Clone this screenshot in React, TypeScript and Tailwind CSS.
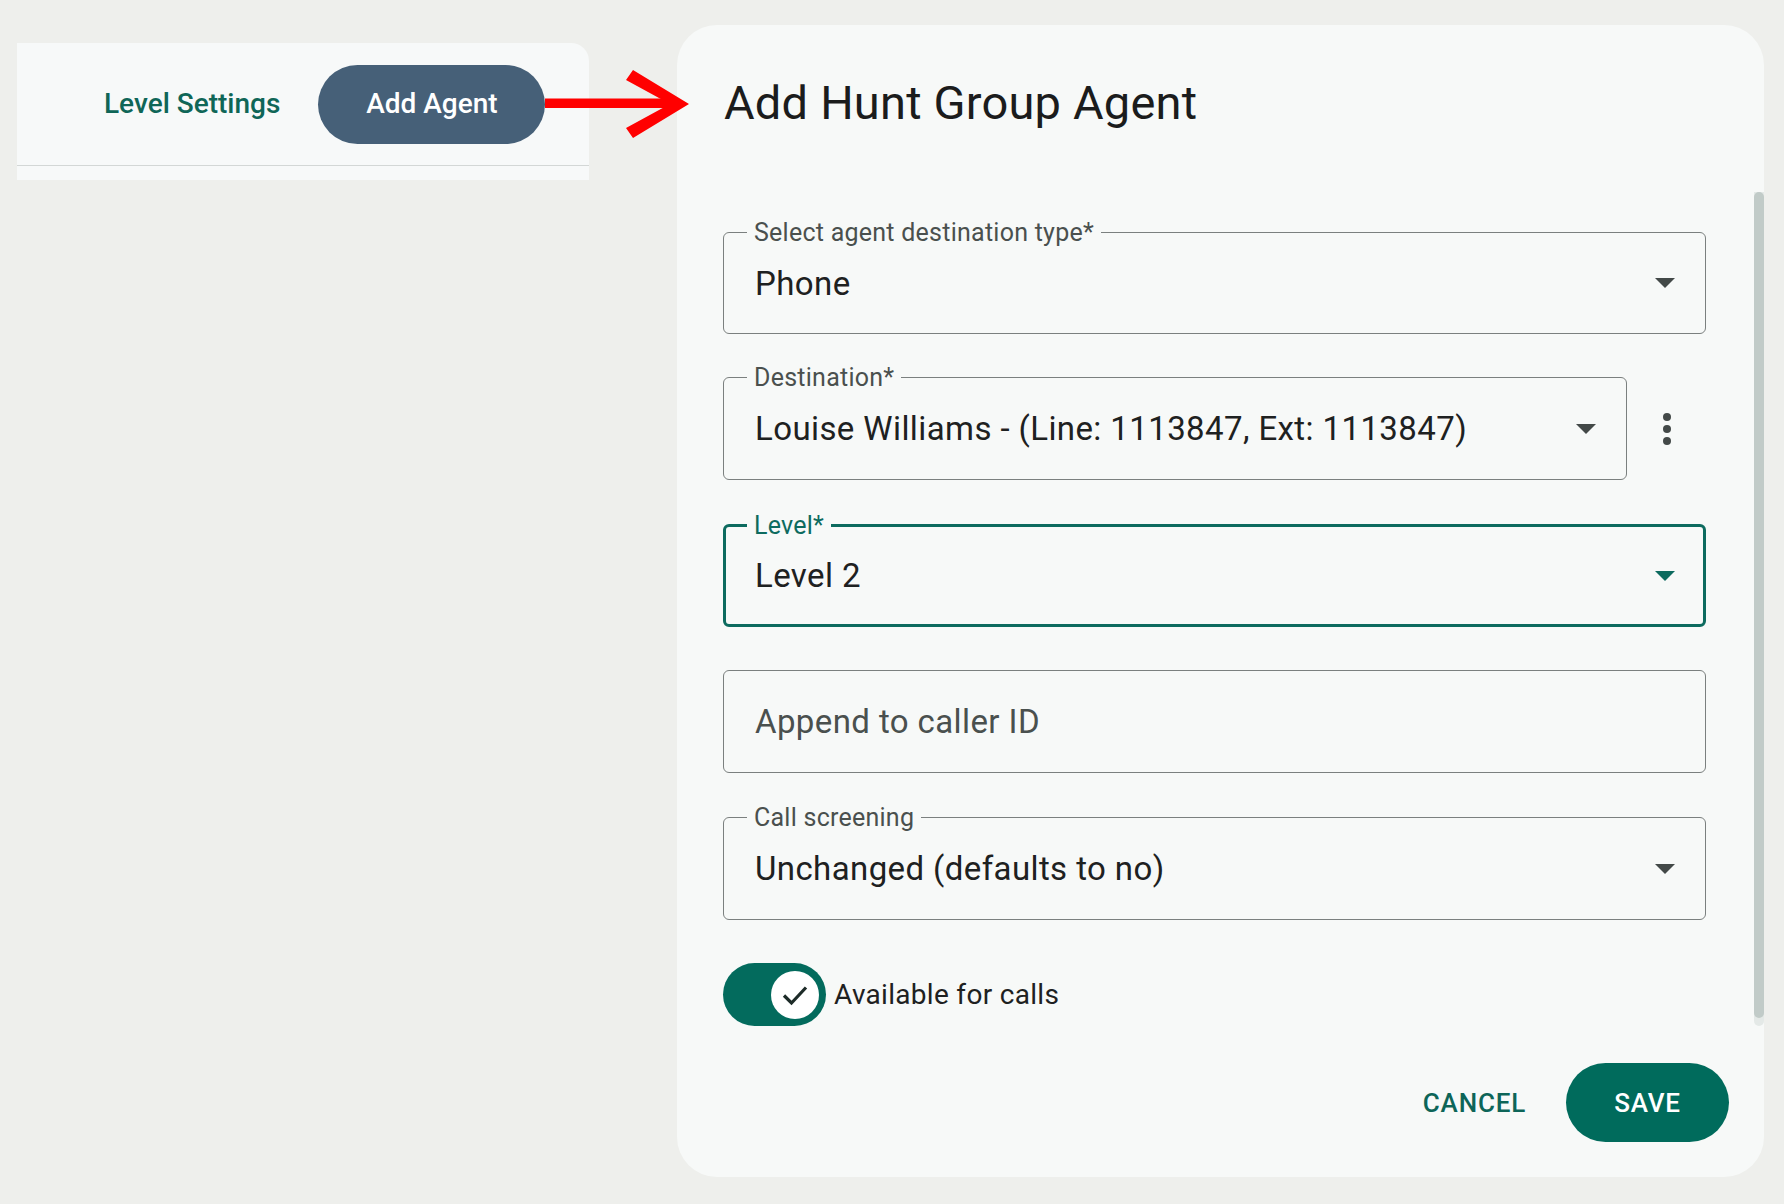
import React from 'react';

function DropArrow({ color = '#434948' }: { color?: string }) {
  return (
    <svg width="20" height="10" viewBox="0 0 20 10" className="shrink-0">
      <path d="M0 0h20L10 10z" fill={color} />
    </svg>
  );
}

interface FieldProps {
  label?: string;
  value?: string;
  placeholder?: string;
  focused?: boolean;
  select?: boolean;
}

function OutlinedField({ label, value, placeholder, focused = false, select = true }: FieldProps) {
  const box = focused
    ? 'border-[3px] border-[#0d6b5f] pl-[29px] pr-[28px]'
    : 'border border-[#7b807f] pl-[31px] pr-[30px]';
  const labelPos = focused ? 'left-[21px] top-[-2px] text-[#0d6b5f]' : 'left-[23px] top-[-1px] text-[#4a504e]';

  return (
    <div className={`relative h-[103px] w-full rounded-[6px] flex items-center justify-between ${box}`}>
      {label && (
        <span
          className={`absolute -translate-y-1/2 px-[7px] bg-[#f7f9f8] text-[25px] leading-none tracking-[0.25px] ${labelPos}`}
        >
          {label}
        </span>
      )}
      {value ? (
        <span className="text-[33px] leading-none tracking-[0.4px] text-[#1e2121] whitespace-nowrap">{value}</span>
      ) : (
        <span className="text-[33px] leading-none tracking-[0.4px] text-[#4a504e] whitespace-nowrap">{placeholder}</span>
      )}
      {select && <DropArrow color={focused ? '#0d6b5f' : '#434948'} />}
    </div>
  );
}

export default function App() {
  return (
    <div className="relative min-h-[1204px] w-full bg-[#eeefec] flex items-start font-['Roboto',sans-serif]">
      {/* Tabs card */}
      <div className="ml-[17px] mt-[43px] w-[572px] h-[137px] bg-[#f7f9f9] rounded-tr-[18px]">
        <div className="h-[123px] flex items-center pl-[87px] gap-[38px] border-b border-[#d3d7d6]">
          <span className="text-[28px] font-medium text-[#0f6657] leading-none">Level Settings</span>
          <button className="h-[79px] w-[227px] rounded-full bg-[#466078] text-white text-[28px] font-medium leading-none">
            Add Agent
          </button>
        </div>
      </div>

      {/* Dialog */}
      <div className="relative ml-[88px] mt-[25px] w-[1087px] h-[1152px] bg-[#f7f9f8] rounded-[40px] overflow-hidden flex flex-col">
        <div className="h-[167px] pt-[54px] pl-[47px] shrink-0">
          <h1 className="text-[47px] leading-none tracking-[0.2px] text-[#1b1c1c] font-normal">Add Hunt Group Agent</h1>
        </div>

        <div className="h-[834px] shrink-0 pl-[46px] pr-[58px] pt-[40px] flex flex-col">
          <OutlinedField label="Select agent destination type*" value="Phone" />

          <div className="mt-[43px] flex items-center">
            <div className="flex-1">
              <OutlinedField label="Destination*" value="Louise Williams - (Line: 1113847, Ext: 1113847)" />
            </div>
            <div className="w-[79px] flex flex-col items-center gap-[4px]">
              <span className="w-[8px] h-[8px] rounded-full bg-[#434948]" />
              <span className="w-[8px] h-[8px] rounded-full bg-[#434948]" />
              <span className="w-[8px] h-[8px] rounded-full bg-[#434948]" />
            </div>
          </div>

          <div className="mt-[44px]">
            <OutlinedField label="Level*" value="Level 2" focused />
          </div>

          <div className="mt-[43px]">
            <OutlinedField placeholder="Append to caller ID" select={false} />
          </div>

          <div className="mt-[44px]">
            <OutlinedField label="Call screening" value="Unchanged (defaults to no)" />
          </div>

          <div className="mt-[43px] flex items-center">
            <div className="w-[103px] h-[63px] rounded-full bg-[#036b5d] flex items-center justify-end pr-[7px]">
              <div className="w-[48px] h-[48px] rounded-full bg-white flex items-center justify-center">
                <svg width="26" height="22" viewBox="0 0 26 22" fill="none">
                  <path d="M2 11.5 9.5 19 24 3.5" stroke="#1d2b28" strokeWidth="3.2" />
                </svg>
              </div>
            </div>
            <span className="ml-[8px] text-[28px] leading-none tracking-[0.3px] text-[#1e2121]">Available for calls</span>
          </div>
        </div>

        <div className="flex-1 flex justify-end items-start pt-[37px] pr-[35px]">
          <button className="h-[79px] px-[20px] mr-[20px] text-[26px] font-medium tracking-[0.8px] text-[#0d6558] leading-none">
            CANCEL
          </button>
          <button className="h-[79px] w-[163px] rounded-full bg-[#006b5c] text-white text-[26px] font-medium tracking-[0.8px] leading-none">
            SAVE
          </button>
        </div>

        {/* scrollbar */}
        <div className="absolute right-0 top-[167px] w-[10px] h-[834px] rounded-b-full bg-[#e4e9e7]">
          <div className="w-[10px] h-[826px] rounded-full bg-[#c1cbc8]" />
        </div>
      </div>

      {/* red annotation arrow */}
      <svg className="absolute left-[540px] top-[66px]" width="155" height="76" viewBox="540 66 155 76">
        <rect x="545" y="98.5" width="128" height="9.5" fill="#ff0000" />
        <path d="M626 80 L633 70 L689 104 L633 138 L626 128 L670 104 Z" fill="#ff0000" />
      </svg>
    </div>
  );
}
